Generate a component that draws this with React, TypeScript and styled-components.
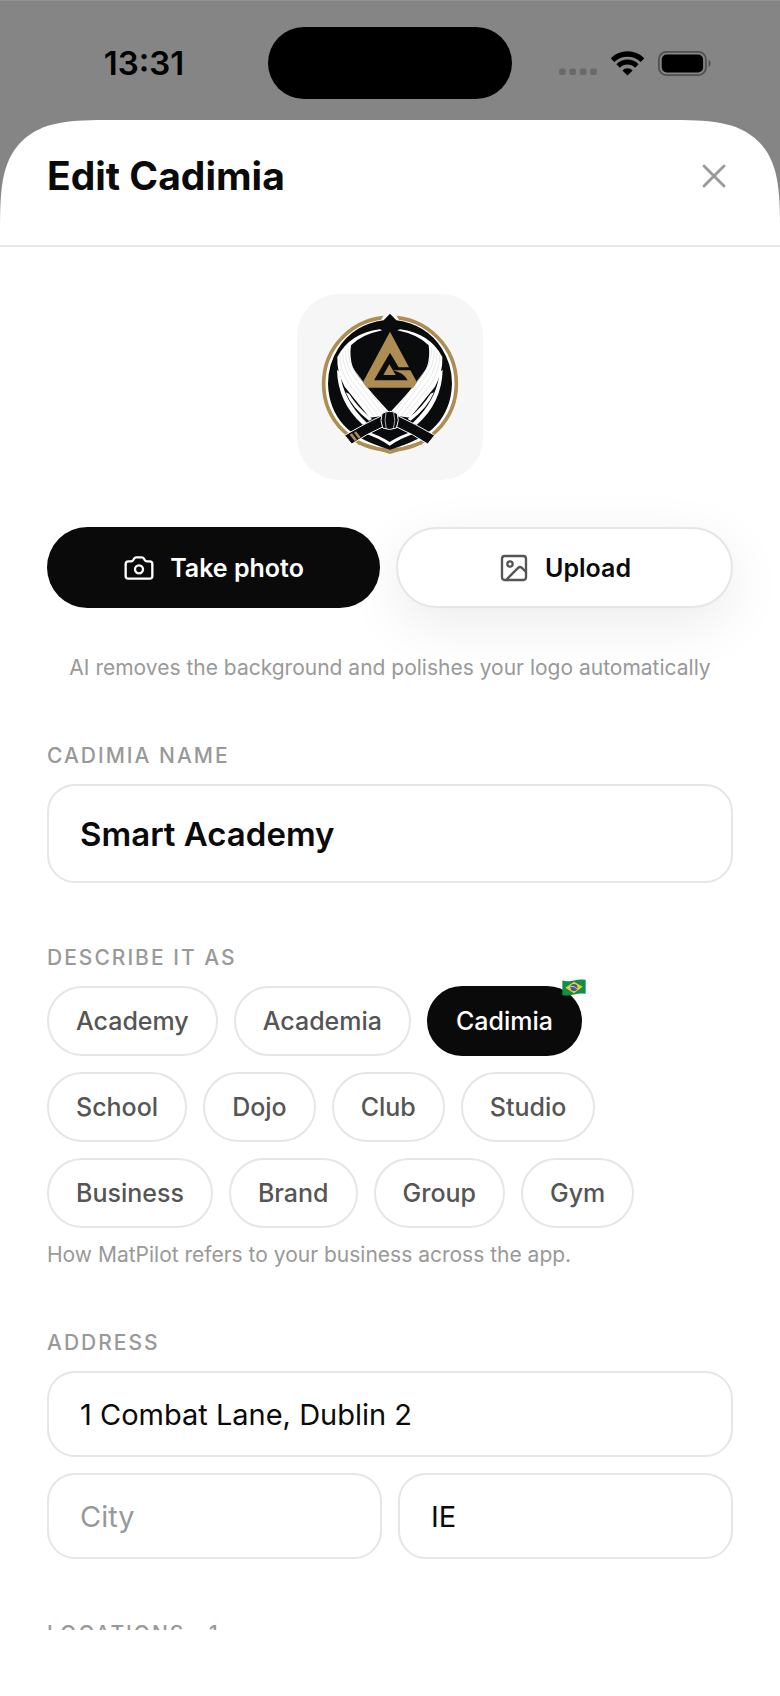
import React, { useState } from 'react';
import styled, { createGlobalStyle, css } from 'styled-components';
import { Camera, Image as ImageIcon, X } from 'lucide-react';

const ink = '#0a0a0a';
const muted = '#999999';
const line = '#e5e5ea';

const GlobalStyle = createGlobalStyle`
  *, *::before, *::after { box-sizing: border-box; }
  html, body { margin: 0; background: #858585; }
  body, button, input { font-family: Inter, "Liberation Sans", sans-serif; }
`;

const Screen = styled.div`
  display: flex;
  flex-direction: column;
  height: 100vh;
  background: #858585;
  color: ${ink};
`;

const StatusBar = styled.div`
  display: grid;
  grid-template-columns: 1fr auto 1fr;
  align-items: center;
  flex: none;
  height: 120px;
  padding-top: 5px;
  border-top: 1px solid #919191;
`;

const Clock = styled.time`
  justify-self: center;
  padding-left: 20px;
  font-size: 33px;
  line-height: 40px;
  font-weight: 600;
  color: #000;
`;

const Island = styled.div`
  width: 244px;
  height: 72px;
  border-radius: 36px;
  background: #000;
`;

const StatusIcons = styled.div`
  display: flex;
  align-items: center;
  justify-content: flex-end;
  gap: 14px;
  padding-right: 69px;

  svg { display: block; }
`;

const Sheet = styled.main`
  display: flex;
  flex: 1;
  flex-direction: column;
  min-height: 0;
  background: #fff;
  border-radius: 80px 80px 0 0;

  @supports (corner-shape: superellipse(1.7)) {
    border-radius: 112px 112px 0 0;
    corner-shape: superellipse(1.7);
  }
`;

const SheetHeader = styled.header`
  display: flex;
  align-items: center;
  justify-content: space-between;
  flex: none;
  height: 127px;
  padding: 0 46px 14px 47px;
  border-bottom: 2px solid ${line};
`;

const Title = styled.h1`
  margin: 0;
  font-size: 39px;
  line-height: 48px;
  font-weight: 700;
`;

const CloseButton = styled.button`
  display: grid;
  place-items: center;
  padding: 0;
  border: 0;
  background: none;
  color: ${muted};
  cursor: pointer;
`;

const SheetBody = styled.div`
  display: flex;
  flex: 1;
  flex-direction: column;
  gap: 61px;
  min-height: 0;
  padding: 47px 47px 0;
  overflow: hidden auto;
  scrollbar-width: none;

  > * { flex: none; }
`;

const SafeArea = styled.div`
  flex: none;
  height: 66px;
`;

const LogoSection = styled.section`
  display: flex;
  flex-direction: column;
  gap: 47px;
`;

const LogoTile = styled.div`
  align-self: center;
  width: 186px;
  height: 186px;
  border-radius: 42px;
  background: #f6f6f6;
  overflow: hidden;

  svg { display: block; }
`;

const Actions = styled.div`
  display: flex;
  gap: 16px;
`;

const ActionButton = styled.button<{ $primary?: boolean }>`
  position: relative;
  z-index: ${({ $primary }) => ($primary ? 1 : 0)};
  display: flex;
  flex: 1 1 0;
  align-items: center;
  justify-content: center;
  gap: 15px;
  height: 81px;
  padding: 0 16px;
  border-radius: 41px;
  font-size: 25px;
  line-height: 32px;
  font-weight: 600;
  cursor: pointer;

  ${({ $primary }) =>
    $primary
      ? css`
          border: 0;
          background: ${ink};
          color: #fff;
        `
      : css`
          border: 2px solid ${line};
          background: #fff;
          color: ${ink};
          box-shadow: 0 16px 56px rgba(0, 0, 0, 0.08);

          svg { color: #555; }
        `}
`;

const Hint = styled.p<{ $centered?: boolean }>`
  margin: 0;
  font-size: 21px;
  line-height: 26px;
  color: ${muted};
  text-align: ${({ $centered }) => ($centered ? 'center' : 'left')};
`;

const Field = styled.section`
  display: flex;
  flex-direction: column;
  gap: 14px;
`;

const labelText = css`
  font-size: 21px;
  line-height: 28px;
  font-weight: 500;
  letter-spacing: 2px;
  text-transform: uppercase;
  color: ${muted};
`;

const Label = styled.label`${labelText}`;
const Heading = styled.h2`
  margin: 0;
  ${labelText}
`;

const Inputs = styled.div`
  display: grid;
  grid-template-columns: 1fr 1fr;
  gap: 16px;
`;

const TextInput = styled.input<{ $large?: boolean; $wide?: boolean }>`
  width: 100%;
  min-width: 0;
  height: ${({ $large }) => ($large ? 99 : 86)}px;
  padding: 0 31px;
  border: 2px solid ${line};
  border-radius: 28px;
  outline: none;
  background: #fff;
  color: ${ink};
  font-size: ${({ $large }) => ($large ? 33 : 29)}px;
  font-weight: ${({ $large }) => ($large ? 600 : 400)};
  grid-column: ${({ $wide }) => ($wide ? '1 / -1' : 'auto')};

  &::placeholder { color: ${muted}; opacity: 1; }
`;

const Chips = styled.div`
  display: flex;
  flex-direction: column;
  gap: 16px;
`;

const ChipRow = styled.div`
  display: flex;
  gap: 16px;
`;

const Chip = styled.button<{ $active: boolean }>`
  position: relative;
  height: 70px;
  padding: 0 27px;
  border: 2px solid ${({ $active }) => ($active ? ink : line)};
  border-radius: 35px;
  background: ${({ $active }) => ($active ? ink : '#fff')};
  color: ${({ $active }) => ($active ? '#fff' : '#555')};
  font-size: 25px;
  line-height: 32px;
  font-weight: 500;
  cursor: pointer;
`;

const FlagBadge = styled.span`
  position: absolute;
  top: -9px;
  right: -6px;

  svg { display: block; }
`;

function SignalDots() {
  return (
    <svg width="38" height="24" viewBox="0 0 38 24" fill="#696969" aria-hidden="true">
      {[0, 10.4, 20.8, 31.2].map((x) => (
        <rect key={x} x={x} y="17.4" width="6.6" height="6.6" rx="2" />
      ))}
    </svg>
  );
}

function WifiGlyph() {
  return (
    <svg width="33" height="25" viewBox="663 152 100 75" aria-hidden="true">
      <g fill="none" stroke="#000">
        <path d="M667.5 179.5 A64.5 64.5 0 0 1 758.5 179.5" strokeWidth="16" />
        <path d="M684.7 196.7 A40 40 0 0 1 741.3 196.7" strokeWidth="15" />
      </g>
      <path d="M713 226 L697.5 210.5 A22 22 0 0 1 728.5 210.5 Z" fill="#000" />
    </svg>
  );
}

function BatteryGlyph() {
  return (
    <svg width="53" height="25" viewBox="0 0 53 25" aria-hidden="true">
      <rect x="0.9" y="0.9" width="47" height="23.2" rx="7.5" fill="none" stroke="#505050" strokeWidth="1.8" />
      <rect x="3.7" y="3.6" width="41.4" height="17.8" rx="5" fill="#000" />
      <path d="M50.6 8.8 C53.2 10.4 53.2 14.6 50.6 16.2 Z" fill="#505050" />
    </svg>
  );
}

function BrazilFlag() {
  return (
    <svg width="24" height="17" viewBox="0 0 72 50" aria-hidden="true">
      <path d="M1 4 Q18 9 36 4 T71 2 V44 Q54 41 36 46 T1 48 Z" fill="#0f8f4c" />
      <path d="M10 26 L36 8 L62 23 L36 42 Z" fill="#f3c92e" />
      <circle cx="36" cy="25" r="10.5" fill="#4355a5" />
      <path d="M26.5 22 Q37 20 45.5 29" fill="none" stroke="#dfe5f5" strokeWidth="2.4" />
    </svg>
  );
}

const lapel = 'M270 133 Q180 145 143 216 Q141 262 165 305 L240 398 L272 394 L296 378 Q204 280 189 246 Q179 214 184 181 Q215 149 278 136 Z';

function LapelSide() {
  return (
    <g>
      <path d={lapel} fill="#fff" />
      <g fill="none" stroke="#dcdcdc" strokeWidth="2">
        <path d="M151 211 Q151 254 177 297 L254 394" />
        <path d="M159 203 Q159 248 187 289 L265 390" />
        <path d="M167 195 Q167 244 197 280 L276 385" />
        <path d="M175 188 Q175 240 207 273 L287 381" />
      </g>
      <path d="M142 254 Q144 352 220 420 L232 414 Q160 347 151 262 Z" fill="#fff" />
      <path d="M168 322 Q188 370 238 407 L247 402 Q203 366 178 326 Z" fill="#fff" />
    </g>
  );
}

function AcademyLogo() {
  return (
    <svg width="186" height="186" viewBox="22 27 558 558" role="img" aria-label="Smart Academy logo">
      <circle cx="301" cy="296" r="199" fill="#fff" stroke="#ad8d51" strokeWidth="11" />
      <path d="M210 470 Q262 483 301 501 Q340 483 392 470 L398 478 Q345 493 301 507 Q257 493 204 478 Z" fill="#ad8d51" />
      <path d="M284 88 L301 76 L318 88 L330 108 H272 Z" fill="#f6f6f6" />
      <path
        d="M301 86 L320 106 Q410 118 456 190 Q487 238 487 296 Q485 370 440 420 Q400 465 301 494 Q202 465 162 420 Q117 370 115 296 Q115 238 146 190 Q192 118 282 106 Z"
        fill="#090b0d"
      />
      <LapelSide />
      <g transform="translate(601 0) scale(-1 1)">
        <LapelSide />
      </g>
      <path d="M226 437 Q270 451 300 471 Q330 451 375 437 L386 441 Q332 460 300 482 Q270 460 215 441 Z" fill="#fff" />
      <path
        d="M301 140 L358 247 H327 L301 203 L253 286 H354 Q340 262 310 256 H362 L382 292 L371 308 H231 L220 291 Z"
        fill="#ad8d51"
      />
      <path d="M299 238 L318 270 H281 Z" fill="#ad8d51" />
      <g fill="#090b0d" stroke="#f6f6f6" strokeWidth="3" strokeLinejoin="round">
        <path d="M276 392 Q225 416 165 451 L186 477 Q230 447 279 426 Z" />
        <path d="M324 392 Q375 416 435 451 L414 477 Q370 447 321 426 Z" />
        <path d="M277 386 Q300 372 323 386 Q330 406 320 429 Q300 438 279 429 Q270 406 277 386 Z" />
        <path d="M289 382 Q283 406 290 432 M312 382 Q319 406 311 432" fill="none" strokeWidth="2" />
      </g>
      <path d="M180 449 L187 445 L202 464 L195 468 Z M193 443 L199 439 L213 457 L207 461 Z" fill="#ad8d51" />
    </svg>
  );
}

const chipRows = [
  ['Academy', 'Academia', 'Cadimia'],
  ['School', 'Dojo', 'Club', 'Studio'],
  ['Business', 'Brand', 'Group', 'Gym'],
];

export default function App() {
  const [kind, setKind] = useState('Cadimia');

  return (
    <>
      <GlobalStyle />
      <Screen>
        <StatusBar>
          <Clock>13:31</Clock>
          <Island />
          <StatusIcons>
            <SignalDots />
            <WifiGlyph />
            <BatteryGlyph />
          </StatusIcons>
        </StatusBar>
        <Sheet>
          <SheetHeader>
            <Title>Edit Cadimia</Title>
            <CloseButton type="button" aria-label="Close">
              <X size={40} strokeWidth={1.75} />
            </CloseButton>
          </SheetHeader>
          <SheetBody>
            <LogoSection>
              <LogoTile>
                <AcademyLogo />
              </LogoTile>
              <Actions>
                <ActionButton type="button" $primary>
                  <Camera size={32} strokeWidth={1.75} />
                  Take photo
                </ActionButton>
                <ActionButton type="button">
                  <ImageIcon size={32} strokeWidth={1.75} />
                  Upload
                </ActionButton>
              </Actions>
              <Hint $centered>AI removes the background and polishes your logo automatically</Hint>
            </LogoSection>

            <Field>
              <Label htmlFor="name">Cadimia name</Label>
              <TextInput id="name" $large defaultValue="Smart Academy" />
            </Field>

            <Field role="group" aria-labelledby="kind-label">
              <Heading id="kind-label">Describe it as</Heading>
              <Chips>
                {chipRows.map((row) => (
                  <ChipRow key={row[0]}>
                    {row.map((name) => (
                      <Chip
                        key={name}
                        type="button"
                        $active={kind === name}
                        aria-pressed={kind === name}
                        onClick={() => setKind(name)}
                      >
                        {name}
                        {name === 'Cadimia' && (
                          <FlagBadge>
                            <BrazilFlag />
                          </FlagBadge>
                        )}
                      </Chip>
                    ))}
                  </ChipRow>
                ))}
              </Chips>
              <Hint>How MatPilot refers to your business across the app.</Hint>
            </Field>

            <Field>
              <Label htmlFor="address">Address</Label>
              <Inputs>
                <TextInput id="address" $wide defaultValue="1 Combat Lane, Dublin 2" />
                <TextInput aria-label="City" placeholder="City" />
                <TextInput aria-label="Country" defaultValue="IE" />
              </Inputs>
            </Field>

            <Field>
              <Heading>Locations · 1</Heading>
            </Field>
          </SheetBody>
          <SafeArea />
        </Sheet>
      </Screen>
    </>
  );
}
